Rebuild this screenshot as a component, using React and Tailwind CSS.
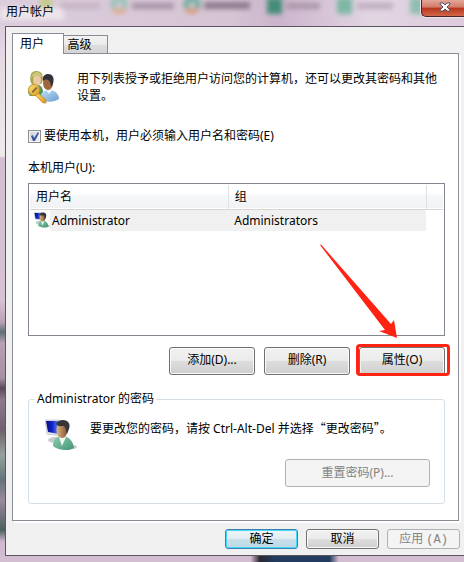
import { useState } from 'react';

const users = [{ name: 'Administrator', group: 'Administrators' }];

const glass =
  'bg-[linear-gradient(to_bottom,#d8c6d8_0px,#e6d9e4_60px,#efe9ee_156px,#d3bfd2_158px,#d6c1d5_300px,#b9a3b5_322px,#5f6f72_332px,#b7a1b3_343px,#a591a2_378px,#594958_388px,#8c7a88_400px,#70606d_430px,#94a09c_455px,#65757a_480px,#9a8a98_500px,#4d5f60_530px,#d0b9ce_542px,#d3bdd1_562px)]';

const face =
  'rounded-[3px] border border-[#707070] bg-[linear-gradient(to_bottom,#f2f2f2_0%,#ebebeb_48%,#dddddd_52%,#cfcfcf_100%)] shadow-[inset_0_0_0_1px_#fafafa]';

const UsersIcon = () => (
  <svg viewBox="0 0 32 34" className="h-[34px] w-8 shrink-0" aria-hidden="true">
    <defs>
      <linearGradient id="shirt" x1="0" y1="0" x2="1" y2="1">
        <stop offset="0" stopColor="#bfe0f5" />
        <stop offset="1" stopColor="#6d9fd0" />
      </linearGradient>
      <linearGradient id="green" x1="0" y1="0" x2="1" y2="1">
        <stop offset="0" stopColor="#8cc083" />
        <stop offset="1" stopColor="#3f8149" />
      </linearGradient>
      <linearGradient id="gold" x1="0" y1="0" x2="1" y2="1">
        <stop offset="0" stopColor="#ffe07a" />
        <stop offset="1" stopColor="#e09a1c" />
      </linearGradient>
    </defs>
    <path d="M0 23c0-7 3-9 7-9 5 0 8 3 8 8l-2 4H2z" fill="url(#green)" />
    <path d="M3 13C1 6 3 1 8 1c6 0 8 4 6 12-2 2-8 3-11 0z" fill="#a7a24f" />
    <ellipse cx="9" cy="10" rx="4" ry="5.5" fill="#edc9a2" />
    <path d="M3 8c1-5 4-6 7-6 2 1 4 3 4 5-4 0-7-2-11 1z" fill="#cbc77c" />
    <path d="M12 29c0-6 4-9 9-9 6 0 10 4 10 9-4 3-14 4-19 0z" fill="url(#shirt)" />
    <path d="M17 19l4 5 4-5z" fill="#e9f4fb" />
    <ellipse cx="20" cy="13" rx="5" ry="7" fill="#a0663d" />
    <path d="M15 11c-1-5 2-7 5-7 4 0 7 3 5 10l-2 3c0-4-1-6-3-7-2-1-4 0-5 1z" fill="#343238" />
    <path d="M8 21l10 9v3h-3l-9-9z" fill="url(#gold)" stroke="#b97816" strokeWidth=".6" />
    <circle cx="6" cy="20" r="5.5" fill="url(#gold)" stroke="#c48a1d" strokeWidth=".8" />
    <path d="M3.500 22l4.500-5 1.500 1-4.500 5z" fill="#806735" />
  </svg>
);

const AccountIcon = ({ className }) => (
  <svg viewBox="0 0 32 32" className={className} aria-hidden="true">
    <defs>
      <linearGradient id="screen" x1="0" y1="0" x2="1" y2="0">
        <stop offset="0" stopColor="#050b79" />
        <stop offset=".5" stopColor="#1026cf" />
        <stop offset="1" stopColor="#7193ef" />
      </linearGradient>
      <linearGradient id="skin" x1="0" y1="0" x2="1" y2="0">
        <stop offset="0" stopColor="#e0b57e" />
        <stop offset="1" stopColor="#7d5334" />
      </linearGradient>
      <linearGradient id="coat" x1="0" y1="0" x2="1" y2="1">
        <stop offset="0" stopColor="#8bd0b0" />
        <stop offset="1" stopColor="#459474" />
      </linearGradient>
    </defs>
    <ellipse cx="10" cy="21" rx="7" ry="3" fill="#c7cacd" />
    <ellipse cx="24" cy="28" rx="8" ry="2.500" fill="#c7cacd" />
    <path d="M0 1l15 0 1 16-14-2z" fill="#dfe4ea" stroke="#b3bac4" strokeWidth=".6" />
    <path d="M1 2h12l1 13-11-2z" fill="url(#screen)" />
    <path d="M8 27c0-7 4-10 9-10 7 0 11 5 12 12-4 3-16 3-21-2z" fill="url(#coat)" />
    <path d="M14 18l3 9 4-9z" fill="#f1f6f5" />
    <ellipse cx="17" cy="11" rx="5.5" ry="8" fill="url(#skin)" />
    <path d="M11 5c1-3 4-4 7-4 5 0 8 4 6 9l-2 5c-1-3-1-6-3-8-3 0-6 1-8-2z" fill="#35363a" />
  </svg>
);

const TitleGlow = () => (
  <svg className="absolute inset-0 h-full w-full" aria-hidden="true">
    <defs>
      <filter id="soft">
        <feGaussianBlur stdDeviation="2.500" />
      </filter>
    </defs>
    <g filter="url(#soft)">
      <rect x="0" y="8" width="64" height="12" fill="#eee5ec" />
      <rect x="40" y="-3" width="12" height="12" fill="#c5c98a" />
      <rect x="60" y="3" width="40" height="6" fill="#c4b3c4" />
      <circle cx="119" cy="5" r="6" fill="none" stroke="#8fc4b4" strokeWidth="5" />
      <path d="M113 9q6 6 12 0" fill="none" stroke="#e5a888" strokeWidth="4" />
      <rect x="132" y="3" width="42" height="6" fill="#a592a6" />
      <circle cx="192" cy="5" r="6" fill="none" stroke="#63ab97" strokeWidth="5" />
      <path d="M186 9q6 6 12 0" fill="none" stroke="#e29c7c" strokeWidth="4" />
      <rect x="204" y="2" width="46" height="7" fill="#8b798c" />
      <rect x="267" y="-2" width="15" height="16" fill="#428d77" />
      <rect x="286" y="3" width="34" height="6" fill="#a895a9" />
      <rect x="337" y="-2" width="15" height="16" fill="#7db8a5" />
      <rect x="357" y="3" width="36" height="6" fill="#bdabbe" />
      <rect x="410" y="-2" width="14" height="16" fill="#8fbfae" />
    </g>
  </svg>
);

const Button = ({ children }) => (
  <button type="button" className={`flex h-7 w-[86px] items-center justify-center pb-[2px] ${face}`}>
    {children}
  </button>
);

export default function App() {
  const [required, setRequired] = useState(true);

  return (
    <div
      lang="zh-CN"
      className={`overflow-hidden pl-[5px] font-['Noto_Sans','Noto_Sans_CJK_SC',sans-serif] text-xs text-black ${glass}`}
    >
      {/* Title bar */}
      <header className="relative -ml-[5px] flex h-[26px] items-start justify-between bg-[linear-gradient(to_right,#dccddc,#d5c4d4_50%,#cbb4cb_60%,#e2d5e2_80%,#dccbdc)] pl-[6px]">
        <TitleGlow />
        <h1 className="relative leading-[23px]">用户帐户</h1>
        <button
          type="button"
          aria-label="关闭"
          className="relative flex h-[17px] w-[43px] items-center justify-center rounded-bl-[5px] border-b border-l border-[#4a2424] bg-[linear-gradient(to_bottom,#e3a598_0%,#d27b69_45%,#b8351c_50%,#d2674a_100%)] pr-px pb-[2px] pl-[5px] shadow-[0_0_0_1px_#eee2ec]"
        >
          <svg viewBox="0 0 12 10" className="h-[10px] w-3" aria-hidden="true">
            <path d="M1 1h3l2 2 2-2h3v1L8 5l3 3v1H8L6 7 4 9H1V8l3-3-3-3z" fill="#fff" stroke="#545263" strokeWidth="1" />
          </svg>
        </button>
      </header>

      <main className="border-y border-l border-[#5d5561] bg-[#f0f0f0] pt-[6px] pr-1 pb-[6px] pl-[6px]">
        {/* Tabs */}
        <div role="tablist" className="relative -mb-px flex h-[21px] items-end">
          <button
            type="button"
            role="tab"
            aria-selected="true"
            className="h-[21px] w-[52px] border border-b-0 border-[#898c95] bg-white pr-3 leading-5"
          >
            用户
          </button>
          <button
            type="button"
            role="tab"
            aria-selected="false"
            className="-ml-px h-[19px] w-[45px] border border-[#898c95] bg-[linear-gradient(to_bottom,#f2f2f2_0%,#ebebeb_50%,#dddddd_55%,#d5d5d5_100%)] pr-3 leading-[18px]"
          >
            高级
          </button>
        </div>

        <section role="tabpanel" className="mr-px border border-[#898c95] bg-white pt-4 pr-[13px] pb-4 pl-[15px] shadow-[2px_2px_0_#fff]">
          <div className="flex items-start gap-[17px]">
            <UsersIcon />
            <p className="leading-[17px]">
              用下列表授予或拒绝用户访问您的计算机，还可以更改其密码和其他
              <br />
              设置。
            </p>
          </div>

          <label className="mt-[22px] flex h-5 items-center gap-[3px]">
            <span className="relative flex h-[13px] w-[13px]">
              <input
                type="checkbox"
                checked={required}
                onChange={(e) => setRequired(e.target.checked)}
                className="h-[13px] w-[13px] appearance-none border border-[#8e8f8f] bg-[linear-gradient(135deg,#cbcfd5,#f6f6f6)] shadow-[inset_0_0_0_1px_#f4f4f4]"
              />
              {required && (
                <svg viewBox="0 0 13 13" className="pointer-events-none absolute inset-0" aria-hidden="true">
                  <path d="M3 6l2-1 1 3 4-6 1 1-4 8H5z" fill="#3c56a0" />
                </svg>
              )}
            </span>
            要使用本机，用户必须输入用户名和密码(E)
          </label>

          <p className="mt-3 h-5 leading-5">本机用户(U):</p>

          {/* User list */}
          <div className="mt-[5px] h-[153px] border border-[#828790] p-px">
            <table className="w-full table-fixed border-collapse text-left">
              <thead>
                <tr className="h-6 border-b border-[#d5d5d5] bg-[linear-gradient(to_bottom,#ffffff_40%,#f7f8fa_42%,#f1f2f4_100%)]">
                  <th className="w-[48%] border-r border-[#e0e3e6] pl-[6px] font-normal">用户名</th>
                  <th className="w-[48%] border-r border-[#dfe0e1] pl-[6px] font-normal">组</th>
                  <th />
                </tr>
              </thead>
              <tbody>
                {users.map((user) => (
                  <tr key={user.name} className="h-[22px]">
                    <td className="p-0">
                      <div className="flex items-center pl-1">
                        <AccountIcon className="h-4 w-4" />
                        <span className="flex-1 bg-[#f0f0f0] pl-[2px] leading-[21px]">{user.name}</span>
                      </div>
                    </td>
                    <td className="p-0">
                      <div className="bg-[#f0f0f0] pl-[6px] leading-[21px]">{user.group}</div>
                    </td>
                    <td />
                  </tr>
                ))}
              </tbody>
            </table>
          </div>

          <div className="mt-[11px] flex justify-end gap-[9px]">
            <Button>添加(D)...</Button>
            <Button>删除(R)</Button>
            <div className="relative">
              <Button>属性(O)</Button>
              {/* Callout frame and arrow */}
              <div className="pointer-events-none absolute -top-[3px] -right-[5px] -bottom-px -left-[3px] rounded-[4px] border-3 border-[#ff2313]" />
              <svg
                viewBox="0 0 80 96"
                className="pointer-events-none absolute bottom-[36px] left-[-40px] h-24 w-20"
                aria-hidden="true"
              >
                <path d="M1 2L2 1.500 72 81l3-4 3 18-18-7 6-1z" fill="#ff2313" />
              </svg>
            </div>
          </div>

          {/* Password group */}
          <fieldset className="mt-[14px] rounded-[3px] border border-[#d5dfe5] pr-[14px] pb-4 pl-4">
            <legend className="-ml-[10px] px-[2px] leading-5">Administrator 的密码</legend>
            <div className="mt-[10px] flex items-start gap-[13px]">
              <AccountIcon className="h-8 w-8 shrink-0" />
              <p className="leading-[17px]">
                要更改您的密码，请按 Ctrl-Alt-Del 并选择
                <span className="font-['Noto_Sans_CJK_SC',sans-serif]">“更改密码”</span>。
              </p>
            </div>
            <div className="mt-[8px] flex justify-end">
              <button
                type="button"
                disabled
                className="h-7 w-[145px] rounded-[3px] border border-[#adb2b5] bg-[#f4f4f4] text-[#838383]"
              >
                重置密码(P)...
              </button>
            </div>
          </fieldset>
        </section>

        <footer className="mt-2 flex justify-end gap-2">
          <button
            type="button"
            className="h-5 w-[73px] rounded-[3px] border border-[#3c7fb1] bg-[linear-gradient(to_bottom,#eef5f9_0%,#e0edf3_48%,#c9dfea_52%,#bcd8e6_100%)] leading-[18px] shadow-[inset_0_0_0_1px_#45d8fb]"
          >
            确定
          </button>
          <button type="button" className={`h-5 w-[73px] leading-[18px] ${face}`}>
            取消
          </button>
          <button
            type="button"
            disabled
            className="h-5 w-[73px] rounded-[3px] border border-[#adb2b5] bg-[#f4f4f4] leading-[18px] text-[#838383]"
          >
            应用 <span className="font-['Liberation_Mono',monospace]">(A)</span>
          </button>
        </footer>
      </main>

      {/* Bottom frame with the desktop showing through */}
      <div className="-ml-[5px] h-[6px] bg-[linear-gradient(to_right,#d3bdd1_54%,#2b2730_56%,#223b5e_59%,#223b5e_71%,#d3bdd1_73%)]" />
    </div>
  );
}
